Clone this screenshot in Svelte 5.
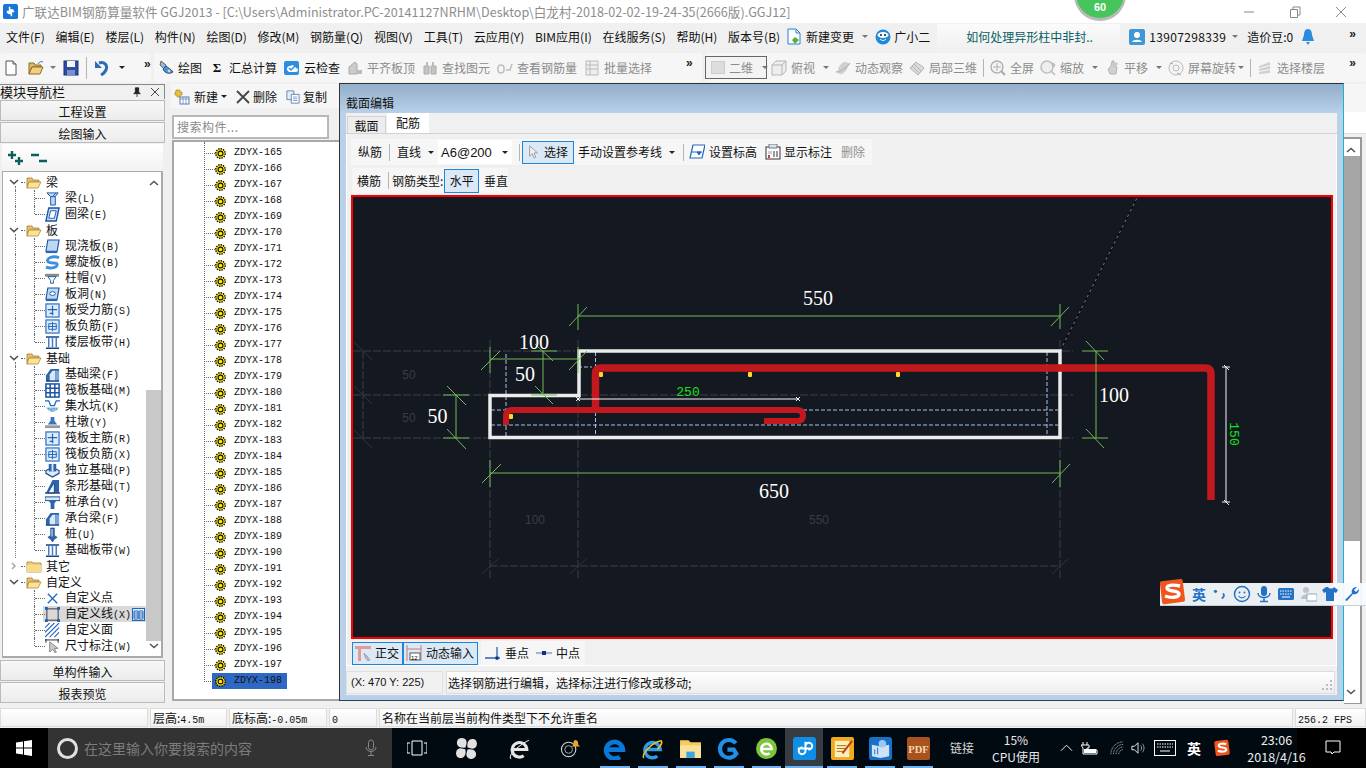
<script>
  const menu = ['文件(F)','编辑(E)','楼层(L)','构件(N)','绘图(D)','修改(M)','钢筋量(Q)','视图(V)','工具(T)','云应用(Y)','BIM应用(I)','在线服务(S)','帮助(H)','版本号(B)'];

  const tree = [
    {t:'f',k:'open',l:'梁'},
    {t:'c',k:'beam',l:'梁(L)'},
    {t:'c',k:'ring',l:'圈梁(E)',last:1},
    {t:'f',k:'open',l:'板'},
    {t:'c',k:'slab',l:'现浇板(B)'},
    {t:'c',k:'spiral',l:'螺旋板(B)'},
    {t:'c',k:'cap',l:'柱帽(V)'},
    {t:'c',k:'hole',l:'板洞(N)'},
    {t:'c',k:'cross',l:'板受力筋(S)'},
    {t:'c',k:'cross2',l:'板负筋(F)'},
    {t:'c',k:'band',l:'楼层板带(H)',last:1},
    {t:'f',k:'open',l:'基础'},
    {t:'c',k:'fbeam',l:'基础梁(F)'},
    {t:'c',k:'raft',l:'筏板基础(M)'},
    {t:'c',k:'pit',l:'集水坑(K)'},
    {t:'c',k:'pier',l:'柱墩(Y)'},
    {t:'c',k:'cross',l:'筏板主筋(R)'},
    {t:'c',k:'cross2',l:'筏板负筋(X)'},
    {t:'c',k:'found',l:'独立基础(P)'},
    {t:'c',k:'strip',l:'条形基础(T)'},
    {t:'c',k:'cap2',l:'桩承台(V)'},
    {t:'c',k:'fbeam',l:'承台梁(F)'},
    {t:'c',k:'pile',l:'桩(U)'},
    {t:'c',k:'band',l:'基础板带(W)',last:1},
    {t:'f',k:'closed',l:'其它',closed:1,endGuide:1},
    {t:'f',k:'open',l:'自定义',noGuide:1},
    {t:'c',k:'xpt',l:'自定义点',noGuide:1},
    {t:'c',k:'sq',l:'自定义线(X)',noGuide:1,sel:1},
    {t:'c',k:'hatch',l:'自定义面',noGuide:1},
    {t:'c',k:'dim',l:'尺寸标注(W)',noGuide:1,last:1},
  ];

  const comps = [];
  for (let i = 165; i <= 198; i++) comps.push(i);

  const grayA = [
    {w:'m',l:'平齐板顶'},{w:'b',l:'查找图元'},{w:'g',l:'查看钢筋量'},{w:'s',l:'批量选择'},
  ];
  const head = (l) => { const i = l.indexOf('('); return i < 0 ? l : l.slice(0, i); };
  const tail = (l) => { const i = l.indexOf('('); return i < 0 ? '' : l.slice(i); };
</script>

{#snippet ti(k)}
  <svg class="ti" viewBox="0 0 16 16">
    {#if k==='beam'}
      <path d="M2 2h12l-3 4v9H6V6z" fill="#bcd8f2" stroke="#1a55a8"/><path d="M8 6l4-4M6 6h5" stroke="#1a55a8"/>
    {:else if k==='ring'}
      <path d="M4 1h11l-3 14H1z" fill="#cfe3f6" stroke="#1a55a8" stroke-width="1.5"/><path d="M6 4h6l-2 8H4z" fill="#fff" stroke="#1a55a8"/>
    {:else if k==='slab'}
      <path d="M3 1h12l-2 12H1z" fill="#bcd8f2" stroke="#1a55a8" stroke-width="1.2"/><path d="M1 13h12v2H1z" fill="#2563b8"/>
    {:else if k==='spiral'}
      <path d="M15 3C8 0 1 4 3 7s10 0 10 3-6 5-12 3" fill="none" stroke="#3f8fdc" stroke-width="3"/>
    {:else if k==='cap'}
      <path d="M0 3h15v3H0z" fill="#8a8a8a"/><path d="M3 6h9L9 10v3H6v-3z" fill="#fff" stroke="#1a55a8"/>
    {:else if k==='hole'}
      <path d="M3 1h12l-2 12H1z" fill="#bcd8f2" stroke="#1a55a8" stroke-width="1.2"/><ellipse cx="8" cy="7" rx="3" ry="2" fill="#fff" stroke="#1a55a8"/><path d="M1 13h12v2H1z" fill="#2563b8"/>
    {:else if k==='cross'}
      <rect x="1" y="1" width="14" height="14" fill="#dcebf9" stroke="#2166bd" stroke-width="1.2"/><path d="M3 7h10M8 3v10M5 11h4" stroke="#2166bd" stroke-width="1.3"/>
    {:else if k==='cross2'}
      <rect x="1" y="1" width="14" height="14" fill="#dcebf9" stroke="#2166bd" stroke-width="1.2"/><path d="M3 8h10M8 3v10M4 5h8v6H4z" fill="none" stroke="#2166bd"/>
    {:else if k==='band'}
      <path d="M1 2h14M1 14h14" stroke="#14438a" stroke-width="1.6"/><path d="M4 3v10M8 3v10M12 3v10" stroke="#4a7ec2" stroke-width="1.6"/>
    {:else if k==='fbeam'}
      <path d="M1 15V9l5-7h9v13z" fill="#2f63ab"/><path d="M5 15V8l3-4h3v11z" fill="#d9e8f7"/><path d="M11 4h4v11h-4z" fill="#7ba6d6"/><path d="M1 15h14" stroke="#14438a" stroke-width="1.5"/>
    {:else if k==='raft'}
      <rect x="1" y="1" width="14" height="14" fill="#fff" stroke="#1a55a8" stroke-width="1.6"/><path d="M1 5.500h14M1 10.500h14M5.500 1v14M10.500 1v14" stroke="#1a55a8" stroke-width="1.6"/>
    {:else if k==='pit'}
      <path d="M0 2h4l2 5h4l2-5h4" fill="none" stroke="#2166bd" stroke-width="1.4"/><path d="M1 9c4 6 10 6 14 0z" fill="#8fc1e8"/><path d="M3 10h1M6 11h1M9 10h1M12 11h1M7 13h1" stroke="#33658f"/>
    {:else if k==='pier'}
      <path d="M6 2h4v4l3 4H3l3-4z" fill="#3a74bc"/><path d="M0 11h16v3H0z" fill="#9a9a9a"/>
    {:else if k==='found'}
      <path d="M1 8l7-3 7 3v3l-7 4-7-4z" fill="#dcebf9" stroke="#14438a" stroke-width="1.2"/><path d="M4 1h8v8H4z" fill="#2f63ab"/><path d="M7 1h2v8H7z" fill="#d9e8f7"/>
    {:else if k==='strip'}
      <path d="M1 15l3-6 4-8h7v14z" fill="#2f63ab"/><path d="M3 15l3-5 3-5h1v10z" fill="#eef5fb" stroke="#14438a"/><path d="M0 15h16" stroke="#14438a" stroke-width="1.4"/>
    {:else if k==='cap2'}
      <path d="M0 2h16v4H0z" fill="#d9e8f7" stroke="#14438a"/><path d="M4 6h8l-2 3v6H6V9z" fill="#2f63ab"/>
    {:else if k==='pile'}
      <path d="M6 1h4v8l3 2-3 2-2 3-2-3-3-2 3-2z" fill="#2f63ab" stroke="#14438a" stroke-width=".6"/><path d="M7 2h1v8H7z" fill="#fff"/>
    {:else if k==='xpt'}
      <path d="M3 3l10 10M13 3L3 13" stroke="#2166bd" stroke-width="1.4"/>
    {:else if k==='sq'}
      <rect x="2" y="2" width="12" height="12" fill="none" stroke="#333"/><g fill="#1561c0"><rect x="0" y="0" width="3" height="3"/><rect x="13" y="0" width="3" height="3"/><rect x="0" y="13" width="3" height="3"/><rect x="13" y="13" width="3" height="3"/></g>
    {:else if k==='hatch'}
      <path d="M0 5l5-5M0 10L10 0M0 15L15 0M5 15L15 5M10 15l5-5" stroke="#2166bd" stroke-width="1.2"/>
    {:else if k==='dim'}
      <path d="M0 1h15M1 0v4M14 0v4" stroke="#222"/><path d="M5 3l0 11 3-3 3 4 1-1-2-4h4z" fill="#c8c8c8" stroke="#888"/>
    {/if}
  </svg>
{/snippet}

{#snippet folder(open)}
  <svg class="fold" viewBox="0 0 16 13">
    {#if open}
      <path d="M1 2h5l1 2h6v2H3L1 12z" fill="#e8bf66" stroke="#a98134" stroke-width=".8"/><path d="M3 6h12l-3 6H1z" fill="#f9e39c" stroke="#b58a3a" stroke-width=".8"/>
    {:else}
      <path d="M1 2h5l1 1h8v9H1z" fill="#f4cf71" stroke="#a98134" stroke-width=".8"/><path d="M1 5h14v7H1z" fill="#f7dc8e"/>
    {/if}
  </svg>
{/snippet}

{#snippet tb(k)}
  <svg class="tbi" viewBox="0 0 16 16">
    {#if k==='new'}
      <path d="M3 1h7l3 3v11H3z" fill="#fff" stroke="#555"/><path d="M10 1v3h3" fill="#ddd" stroke="#555"/>
    {:else if k==='open'}
      <path d="M1 3h5l1 2h6v2H4L1 14z" fill="#dcb866" stroke="#8c6a2e"/><path d="M4 7h11l-3 7H1z" fill="#f3d07c" stroke="#8c6a2e"/><path d="M10 4c1-2 3-3 5-2" fill="none" stroke="#3a6fb8"/>
    {:else if k==='save'}
      <rect x="1" y="1" width="14" height="14" fill="#2d4ea8" stroke="#182f72"/><rect x="4" y="1" width="8" height="6" fill="#f5f5f5"/><rect x="4" y="10" width="8" height="5" fill="#7d8fc8"/>
    {:else if k==='undo'}
      <path d="M5 3c5-2 9 2 7 7-1 2-3 4-5 5" fill="none" stroke="#2b6cb8" stroke-width="3"/><path d="M1 1v7h7z" fill="#2b6cb8"/>
    {:else if k==='draw'}
      <path d="M3 1l5 4-2 4-4-4z" fill="#9ab7d9" stroke="#333" stroke-width=".7"/><path d="M5 9c2 5 7 5 10 3-2-3-5-4-7-6z" fill="#4a8fd9" stroke="#1d4f90"/><circle cx="11" cy="11" r="1.400" fill="#ffd860"/>
    {:else if k==='cloud'}
      <rect x="0" y="1" width="15" height="14" rx="2" fill="#2c8ee0"/><path d="M3 10a3 3 0 013-4 4 4 0 016 2 2 2 0 010 4H5z" fill="#fff"/><path d="M5 8l2 2 4-4" fill="none" stroke="#2c8ee0" stroke-width="1.400"/>
    {:else if k==='m'}
      <path d="M2 14V7l6-5 2 2v10z" fill="#ccc" stroke="#aaa"/><path d="M10 10h5v4h-5z" fill="#bbb"/>
    {:else if k==='b'}
      <path d="M2 6h5v8H2zM9 6h5v8H9z" fill="#c4c4c4" stroke="#aaa"/><path d="M4 2h2v4H4zM10 2h2v4h-2z" fill="#bbb"/>
    {:else if k==='g'}
      <path d="M1 8a3 3 0 016 0v2a3 3 0 01-6 0zM9 10h4l2-6" fill="none" stroke="#c0c0c0" stroke-width="1.600"/>
    {:else if k==='s'}
      <rect x="2" y="1" width="12" height="14" fill="#eee" stroke="#bbb"/><path d="M2 5h12M2 9h12M6 1v14" stroke="#bbb"/>
    {:else if k==='cube'}
      <path d="M1 5l4-4h10v10l-4 4H1z" fill="#eee" stroke="#b5b5b5"/><path d="M1 5h10v10M11 5l4-4" fill="none" stroke="#b5b5b5"/>
    {:else if k==='orbit'}
      <ellipse cx="8" cy="8" rx="4" ry="7" transform="rotate(35 8 8)" fill="#d0d0d0"/><path d="M1 12c5 0 10-4 14-9" fill="none" stroke="#bbb" stroke-width="1.400"/>
    {:else if k==='part'}
      <path d="M1 8l6-6 8 6-6 7z" fill="#ddd" stroke="#b0b0b0"/><path d="M5 4l7 7M3 6l7 7" stroke="#b0b0b0"/>
    {:else if k==='zoomf'}
      <circle cx="7" cy="7" r="6" fill="#f3f3f3" stroke="#b0b0b0" stroke-width="1.400"/><path d="M7 3v8M3 7h8" stroke="#b0b0b0"/><path d="M11 11l4 4" stroke="#aaa" stroke-width="2"/>
    {:else if k==='zoom'}
      <circle cx="7" cy="7" r="6" fill="#eee" stroke="#c0c0c0" stroke-width="1.600"/><path d="M11 11l4 4M12 3l3 2M12 6h3" stroke="#bbb" stroke-width="1.600"/>
    {:else if k==='pan'}
      <path d="M4 9l3-3 1-5 2 0v5l3 1-1 7H6z" fill="#cfcfcf" stroke="#aaa" stroke-width=".8"/><path d="M12 2v4M10 4h4" stroke="#bbb"/>
    {:else if k==='rot'}
      <circle cx="8" cy="8" r="7" fill="#f4f4f4" stroke="#bbb"/><circle cx="8" cy="8" r="3" fill="none" stroke="#bbb"/><path d="M2 3l3 1M9 13l4 2" stroke="#aaa"/>
    {:else if k==='floor'}
      <path d="M2 6l11-4v3L2 8zM2 9l11-3v3L2 11zM2 12l11-2v3L2 14z" fill="#d0d0d0"/>
    {:else if k==='cursor'}
      <path d="M3 1l0 12 3-3 2 5 2-1-2-5h4z" fill="#eee" stroke="#999"/>
    {:else if k==='lvl'}
      <path d="M4 1h12l-3 13H1z" fill="#fff" stroke="#2166bd" stroke-width="1.200"/><path d="M3 8h10M8 8l2 3 2-3z" fill="#2166bd" stroke="#2166bd"/>
    {:else if k==='mark'}
      <rect x="1" y="3" width="14" height="12" fill="#fff" stroke="#333"/><path d="M3 7h4v3H3z" fill="#bcd4ec"/><path d="M4 0h8v4H4z" fill="#d9e4f0" stroke="#777"/><rect x="3" y="11" width="2" height="3" fill="#d33"/><path d="M9 7v6M12 7v6" stroke="#333"/>
    {:else if k==='ortho'}
      <path d="M0 1h16v3H0zM3 4h3v12H3z" fill="#e29a9a"/><path d="M9 8l3 3 3 4-2 1-3-4z" fill="#bbb" stroke="#888" stroke-width=".6"/>
    {:else if k==='dyn'}
      <path d="M1 0v16M15 0v16M1 4h14" stroke="#c97878"/><rect x="4" y="8" width="10" height="7" fill="#fff" stroke="#555"/><text x="5" y="14.500" font-size="6" font-family="Liberation Sans">12</text>
    {:else if k==='perp'}
      <path d="M0 13h15M12 2v13" stroke="#2b62b8" stroke-width="1.300"/><rect x="10.500" y="11.500" width="3" height="3" fill="#102f86"/>
    {:else if k==='mid'}
      <path d="M0 8h16" stroke="#6a93cc" stroke-width="1.300"/><rect x="6" y="6" width="4" height="4" fill="#102f86"/>
    {/if}
  </svg>
{/snippet}

{#snippet caret()}<span class="caret"></span>{/snippet}

<div class="app">
  <div class="bubble"><span>60</span></div>

  <header class="title">
    <svg class="logo" viewBox="0 0 16 16"><rect width="16" height="16" rx="2" fill="#1677d9"/><path d="M5 8a2 2 0 102-2V3M11 8a2 2 0 10-2 2v3M4 8h8" fill="none" stroke="#fff" stroke-width="1.600"/></svg>
    <span class="ttext">广联达BIM钢筋算量软件 GGJ2013 - [C:\Users\Administrator.PC-20141127NRHM\Desktop\白龙村-2018-02-02-19-24-35(2666版).GGJ12]</span>
    <div class="wbtns">
      <svg viewBox="0 0 12 12"><path d="M1 6h10" stroke="#888"/></svg>
      <svg viewBox="0 0 12 12"><path d="M1.500 3.500h7v8h-7zM4 3V1h7v8H9" fill="none" stroke="#888"/></svg>
      <svg viewBox="0 0 12 12"><path d="M1 1l10 10M11 1L1 11" stroke="#888"/></svg>
    </div>
  </header>

  <nav class="menu">
    <div class="mitems">
      {#each menu as m}<span>{m}</span>{/each}
    </div>
    <div class="mx change">
      <svg viewBox="0 0 14 17" class="ci"><path d="M1 1h8l4 4v11H1z" fill="#fff" stroke="#2b7fd6"/><path d="M9 1v4h4" fill="none" stroke="#2b7fd6"/><path d="M8 9l4 3-4 4-3-4z" fill="#5ab035"/></svg>
      <span>新建变更</span>{@render caret()}
    </div>
    <div class="mx gxe">
      <svg viewBox="0 0 16 16" class="ci2"><circle cx="8" cy="8" r="7.500" fill="#1f8ad8"/><ellipse cx="8" cy="6" rx="5.500" ry="3" fill="#fff"/><circle cx="6" cy="6" r="1" fill="#123"/><circle cx="10" cy="6" r="1" fill="#123"/><path d="M5 10c2 2 4 2 6 0" stroke="#fff" fill="none"/></svg>
      <span>广小二</span>
    </div>
    <div class="ticker"><span>如何处理异形柱中非封..</span></div>
    <div class="mx user">
      <svg viewBox="0 0 16 16" class="ci2"><rect width="16" height="16" rx="2" fill="#3f97d6"/><circle cx="8" cy="6" r="3" fill="#fff"/><path d="M3 13c1-3 9-3 10 0z" fill="#fff"/></svg>
      <span class="phone">13907298339</span>{@render caret()}
      <span class="bean">造价豆:0</span>
      <svg viewBox="0 0 14 18" class="bell"><path d="M7 1c3 0 4 3 4 6l2 6H1l2-6c0-3 1-6 4-6zM5 14h4l-2 3z" fill="#2a8be0"/></svg>
    </div>
    <span class="more lastmore">»</span>
  </nav>

  <div class="tools">
    <div class="band b1">
      {@render tb('new')}{@render tb('open')}<span class="caret c1"></span>{@render tb('save')}<i class="sep"></i>{@render tb('undo')}<span class="caret c2"></span><span class="more m1">»</span>
    </div>
    <div class="band b2">
      <div class="tool dk">{@render tb('draw')}<span>绘图</span></div>
      <div class="tool dk"><b class="sigma">Σ</b><span>汇总计算</span></div>
      <div class="tool dk">{@render tb('cloud')}<span>云检查</span></div>
      {#each grayA as g}
        <div class="tool">{@render tb(g.w)}<span>{g.l}</span></div>
      {/each}
      <span class="more m2">»</span>
    </div>
    <div class="band b3">
      <div class="combo2"><i class="sq"></i><span>二维</span><span class="caret"></span></div>
      <div class="tool">{@render tb('cube')}<span>俯视</span><span class="caret"></span></div>
      <div class="tool">{@render tb('orbit')}<span>动态观察</span></div>
      <div class="tool">{@render tb('part')}<span>局部三维</span></div>
      <i class="sep"></i>
      <div class="tool">{@render tb('zoomf')}<span>全屏</span></div>
      <div class="tool">{@render tb('zoom')}<span>缩放</span><span class="caret"></span></div>
      <div class="tool">{@render tb('pan')}<span>平移</span><span class="caret"></span></div>
      <div class="tool">{@render tb('rot')}<span>屏幕旋转</span><span class="caret tight"></span></div>
      <i class="sep"></i>
      <div class="tool">{@render tb('floor')}<span>选择楼层</span></div>
      <span class="more m3">»</span>
    </div>
  </div>

  <main class="main">
    <aside class="nav">
      <div class="navhead"><span>模块导航栏</span><span class="pins">
        <svg viewBox="0 0 10 12"><path d="M3 1h4v5l2 2H1l2-2zM5 8v4" fill="#222" stroke="#222"/></svg>
        <svg viewBox="0 0 10 10"><path d="M1 1l8 8M9 1L1 9" stroke="#444"/></svg>
      </span></div>
      <div class="nbtn">工程设置</div>
      <div class="nbtn">绘图输入</div>
      <div class="treewrap">
        <div class="treetool">
          <svg viewBox="0 0 18 16"><path d="M5 1v8M1 5h8" stroke="#0b5f5c" stroke-width="2.400"/><path d="M12 7v8M8 11h8" stroke="#0b5f5c" stroke-width="2.400"/></svg>
          <svg viewBox="0 0 18 16"><path d="M1 5h8M9 11h8" stroke="#0b5f5c" stroke-width="2.400"/></svg>
        </div>
        <div class="treebox">
          <div class="rows">
            {#each tree as r}
              {#if r.t==='f'}
                <div class="row frow" class:eg={r.endGuide}>
                  <svg class="chev" viewBox="0 0 10 8">
                    {#if r.closed}<path d="M3 1l3 3-3 3" fill="none" stroke="#aaa" stroke-width="1.600"/>
                    {:else}<path d="M1 2l4 3.600L9 2" fill="none" stroke="#555" stroke-width="1.600"/>{/if}
                  </svg>
                  <i class="stub s1"></i>
                  {@render folder(!r.closed)}
                  <span class="fl">{r.l}</span>
                </div>
              {:else}
                <div class="row crow" class:sel={r.sel} class:guide={!r.noGuide} class:last={r.last}>
                  <i class="stub s2"></i>
                  {@render ti(r.k)}
                  <span class="cl2">{head(r.l)}<span class="mn12">{tail(r.l)}</span></span>
                  {#if r.sel}<svg class="mini" viewBox="0 0 13 13"><rect x=".5" y=".5" width="12" height="12" fill="#e3effa" stroke="#2166bd"/><path d="M2 3h4v8H2zM7 3h4v8H7z" fill="#fff" stroke="#2166bd"/><path d="M2 5h4M2 7h4M2 9h4M7 5h4M7 7h4M7 9h4" stroke="#2166bd"/></svg>{/if}
                </div>
              {/if}
            {/each}
          </div>
          <div class="tscroll">
            <svg class="up" viewBox="0 0 10 6"><path d="M1 5l4-3.500L9 5" fill="none" stroke="#555" stroke-width="1.600"/></svg>
            <div class="thumb"></div>
            <svg class="dn" viewBox="0 0 10 6"><path d="M1 1l4 3.500L9 1" fill="none" stroke="#555" stroke-width="1.600"/></svg>
          </div>
        </div>
      </div>
      <div class="nbtn">单构件输入</div>
      <div class="nbtn">报表预览</div>
    </aside>

    <section class="comp">
      <div class="ctool">
        <svg class="ci3" viewBox="0 0 16 16"><path d="M2 1h4v2h2v3H6v2H3V6H1V3h1z" fill="#e9c13a" stroke="#9c7f16" stroke-width=".6"/><rect x="6" y="8" width="9" height="7" fill="#fff" stroke="#5a7fb0"/><path d="M6 10h9M9 8v7M12 8v7" stroke="#5a7fb0" stroke-width=".7"/></svg>
        <span>新建</span><span class="caret dark"></span>
        <svg class="ci3 x" viewBox="0 0 14 14"><path d="M1 1l12 12M13 1L1 13" stroke="#444" stroke-width="1.800"/></svg>
        <span>删除</span>
        <svg class="ci3 x" viewBox="0 0 16 16"><path d="M1 1h8v10H1z" fill="#e4eef8" stroke="#5a7fb0"/><path d="M6 5h9v10H6z" fill="#fff" stroke="#5a7fb0"/><path d="M8 8h5M8 10h5M8 12h5" stroke="#7a9cc6"/></svg>
        <span>复制</span>
      </div>
      <div class="search">搜索构件...</div>
      <div class="clist">
        {#each comps as c}
          <div class="citem" class:csel={c===198}>
            <i class="stub s3"></i>
            <svg class="sun" viewBox="0 0 10 10"><circle cx="5" cy="5" r="4.300" fill="#ffe600" stroke="#111" stroke-width="1.400" stroke-dasharray="1.300 .9"/><circle cx="5" cy="5" r="2.200" fill="none" stroke="#111"/><circle cx="5" cy="5" r=".8" fill="#ffe600"/></svg>
            <span class="mono">ZDYX-{c}</span>
          </div>
        {/each}
      </div>
    </section>

    <div class="rightstrip">
      <div class="rtop"></div>
      <div class="rwhite"></div>
      <div class="rscroll">
        <svg class="up" viewBox="0 0 10 6"><path d="M1 5l4-3.500L9 5" fill="none" stroke="#555" stroke-width="1.600"/></svg>
        <div class="rthumb"></div>
        <svg class="dn" viewBox="0 0 10 6"><path d="M1 1l4 3.500L9 1" fill="none" stroke="#555" stroke-width="1.600"/></svg>
      </div>
    </div>

    <div class="dialog">
      <div class="dtitle">截面编辑</div>
      <div class="dpage">
        <div class="tabs"><span class="tab">截面</span><span class="tab on">配筋</span></div>
        <div class="dbody">
          <div class="bar1">
            <span class="lb">纵筋</span><i class="sep"></i>
            <span class="lb">直线</span><span class="caret dark"></span>
            <div class="combo"><span>A6@200</span><span class="caret dark"></span></div>
            <i class="sep s4"></i>
            <div class="pressed sel1">{@render tb('cursor')}<span>选择</span></div>
            <span class="lb">手动设置参考线</span><span class="caret dark"></span>
            <i class="sep s5"></i>
            <div class="lbi">{@render tb('lvl')}<span>设置标高</span></div>
            <div class="lbi mk">{@render tb('mark')}<span>显示标注</span></div>
            <span class="lb grey">删除</span>
          </div>
          <div class="bar2">
            <span class="lb">横筋</span><i class="sep"></i>
            <span class="lb t">钢筋类型:</span>
            <div class="pressed h">水平</div>
            <span class="lb">垂直</span>
          </div>
          <div class="canvas">
            <svg viewBox="353 197 978 440">
              <g class="da">
                <path d="M353 351H575M353 395H490M353 438H490"/>
                <path d="M580 395H1073M1062 351H1073M1062 438H1073"/>
                <path d="M363 351V438"/>
                <path d="M490 340V580M578 340V580M1060 340V580"/>
                <path d="M490 566H1060"/>
              </g>
              <g class="dal">
                <path d="M354 342L372 360M354 386L372 404M354 430L372 448"/>
                <path d="M482 574L499 558M570 574L587 558M1052 574L1069 558"/>
              </g>
              <path d="M1060 351L1137 198" class="diag"/>
              <path d="M1060 351L1137 198" class="diag2"/>

              <g class="bl">
                <path d="M491 410H1058M491 425H1058"/>
                <path d="M506 354V437M595.500 352V437M1047 352V437"/>
                <path d="M578 367H592"/>
              </g>

              <path d="M579 351H1060V437.500H490V395.500H579Z" class="outline"/>

              <path d="M595.500 410V374Q595.500 368 601 368H1205Q1211 368 1211 374V500" class="r8"/>
              <path d="M506 425V416Q506 410 512 410H797Q803 410 803 415.500Q803 421 797 421H764" class="r6"/>

              <g fill="#ffd921">
                <rect x="509" y="414" width="4" height="5" rx="1"/><rect x="599" y="372" width="4" height="5" rx="1"/>
                <rect x="748" y="372" width="4" height="5" rx="1"/><rect x="896" y="372" width="4" height="5" rx="1"/>
              </g>

              <g class="gr">
                <path d="M578 316H1060M578 304V330M1060 304V329M569 326L587 307M1051 326L1069 307"/>
                <path d="M490 359H578M490 347V373M578 347V373M481 370L500 351M569 370L587 351"/>
                <path d="M543 351V395M531 351H557M531 395H557M535 344L553 361M535 386L553 404"/>
                <path d="M456 395V438M443 395H469M443 438H469M447 386L466 405M447 429L466 449"/>
                <path d="M490 473H1060M490 460V487M1060 460V487M482 483L501 464M1052 483L1070 464"/>
                <path d="M1096 351V438M1082 351H1108M1082 438H1108M1086 341L1104 360M1086 429L1104 448"/>
              </g>

              <g class="wl">
                <path d="M578 399H798M576 397L580 401M576 401L580 397M796 401L800 397M796 397L800 401"/>
                <path d="M1226 367V502M1222 367H1230M1222 502H1230M1224 365L1229 370M1224 500L1229 505"/>
              </g>

              <g class="cadt">
                <text x="818" y="304.500">550</text>
                <text x="534" y="349">100</text>
                <text x="525" y="380.500">50</text>
                <text x="437.500" y="423">50</text>
                <text x="774" y="498">650</text>
                <text x="1114" y="402">100</text>
              </g>
              <g class="cadg">
                <text x="409" y="379">50</text>
                <text x="409" y="422">50</text>
                <text x="535" y="524">100</text>
                <text x="819" y="524">550</text>
              </g>
              <text x="688" y="395.500" class="gt">250</text>
              <text x="0" y="0" class="gt" transform="translate(1230 434) rotate(90)">150</text>
            </svg>
          </div>
          <div class="bar3">
            <div class="pressed o1">{@render tb('ortho')}<span>正交</span></div>
            <div class="pressed o2">{@render tb('dyn')}<span>动态输入</span></div>
            <div class="snap">
              <div class="lbi">{@render tb('perp')}<span>垂点</span></div>
              <div class="lbi">{@render tb('mid')}<span>中点</span></div>
            </div>
          </div>
        </div>
        <div class="dstatus">
          <span class="xy">(X: 470 Y: 225)</span>
          <span class="msg">选择钢筋进行编辑，选择标注进行修改或移动;<svg class="grip" viewBox="0 0 12 12"><g fill="#bbb"><rect x="9" y="0" width="2" height="2"/><rect x="5" y="4" width="2" height="2"/><rect x="9" y="4" width="2" height="2"/><rect x="1" y="8" width="2" height="2"/><rect x="5" y="8" width="2" height="2"/><rect x="9" y="8" width="2" height="2"/></g></svg></span>
        </div>
      </div>
    </div>

    <div class="sogou">
      <svg class="slogo" viewBox="0 0 26 26"><rect x="1" y="1" width="23" height="23" rx="2" transform="rotate(-7 13 13)" fill="#f1551e"/><path d="M20 7c-4-1-13-2-13 2s12 2 12 6-9 4-14 2" fill="none" stroke="#fff" stroke-width="3.400"/></svg>
      <b class="seng">英</b>
      <svg viewBox="0 0 20 16" class="sg"><circle cx="5" cy="5" r="1.800" fill="#2372c6"/><path d="M13 8c2 0 2 3-1 5" fill="none" stroke="#2372c6" stroke-width="2"/></svg>
      <svg viewBox="0 0 18 18" class="sg"><circle cx="9" cy="9" r="7.500" fill="none" stroke="#2372c6" stroke-width="1.500"/><circle cx="6.500" cy="7.500" r="1" fill="#2372c6"/><circle cx="11.500" cy="7.500" r="1" fill="#2372c6"/><path d="M5.500 11c2 2.500 5 2.500 7 0" fill="none" stroke="#2372c6" stroke-width="1.200"/></svg>
      <svg viewBox="0 0 18 18" class="sg"><rect x="6" y="1" width="6" height="10" rx="3" fill="#2372c6"/><path d="M3 8c0 6 12 6 12 0M9 13v3M5 16.500h8" fill="none" stroke="#2372c6" stroke-width="1.500"/></svg>
      <svg viewBox="0 0 18 18" class="sg"><rect x="1" y="3" width="16" height="12" rx="1.500" fill="#2372c6"/><path d="M3 6h12M3 9h12" stroke="#fff" stroke-dasharray="1.500 1"/><path d="M5 12h8" stroke="#fff"/></svg>
      <svg viewBox="0 0 18 18" class="sg"><circle cx="7" cy="5" r="3" fill="#b6c4d4"/><path d="M2 14c0-6 10-6 10 0z" fill="#b6c4d4"/><rect x="8" y="9" width="10" height="7" fill="#fff" stroke="#9aa9ba"/></svg>
      <svg viewBox="0 0 18 18" class="sg"><path d="M5 2L1 5l2 3 2-1v9h8V7l2 1 2-3-4-3c-1 2-5 2-6 0z" fill="#2372c6"/></svg>
      <svg viewBox="0 0 18 18" class="sg"><path d="M2 15l7-7a4.500 4.500 0 015-6l-3 3 2 2 3-3a4.500 4.500 0 01-6 5l-6 7z" fill="#2372c6"/></svg>
    </div>
  </main>

  <footer class="status">
    <div class="st a"></div>
    <div class="st b">层高:<span class="mn">4.5m</span></div>
    <div class="st c">底标高:<span class="mn">-0.05m</span></div>
    <div class="st d"><span class="mn">0</span></div>
    <div class="st e">名称在当前层当前构件类型下不允许重名</div>
    <div class="st f"><span class="mn">256.2 FPS</span></div>
  </footer>

  <div class="taskbar">
    <div class="start"><svg viewBox="0 0 16 16"><path d="M0 2.500l7-1v6H0zM8 1.300L16 0v7.500H8zM0 8.500h7v6l-7-1zM8 8.500h8V16l-8-1.200z" fill="#fff"/></svg></div>
    <div class="tsearch">
      <i class="cortana"></i>
      <span>在这里输入你要搜索的内容</span>
      <svg viewBox="0 0 12 18"><rect x="3.500" y="1" width="5" height="10" rx="2.500" fill="none" stroke="#888"/><path d="M1 8c0 6 10 6 10 0M6 13v3M3 16.500h6" fill="none" stroke="#888"/></svg>
    </div>
    <div class="apps">
      <div class="app-i"><svg viewBox="0 0 20 20" class="tv"><path d="M5 3h10v14H5zM3 5H0v10h3M17 5h3v10h-3" fill="none" stroke="#fff"/></svg></div>
      <div class="app-i"><svg viewBox="0 0 22 22"><g fill="#e2e2e2"><path d="M10 10C4 11 1 8 2 4s8-4 9 0c.5 2-.5 4-1 6z"/><path d="M12 10C11 4 14 1 18 2s4 8 0 9c-2 .5-4-.5-6-1z"/><path d="M12 12c6-1 9 2 8 6s-8 4-9 0c-.5-2 .5-4 1-6z"/><path d="M10 12c1 6-2 9-6 8s-4-8 0-9c2-.5 4 .5 6 1z"/></g></svg></div>
      <div class="app-i"><svg viewBox="0 0 22 22"><path d="M5 12h13a7 7 0 10-3 6" fill="none" stroke="#e6e6e6" stroke-width="3"/><path d="M3 21c-4-3 6-12 17-18" fill="none" stroke="#e6e6e6"/></svg></div>
      <div class="app-i"><svg viewBox="0 0 24 22"><circle cx="9" cy="12" r="7.500" fill="none" stroke="#ccc" stroke-width="1.200"/><circle cx="9" cy="12" r="4" fill="none" stroke="#aaa"/><path d="M16 2c3 0 3 3 3 5l2 2H12l2-2c0-2 0-5 2-5z" fill="#e8a823"/></svg></div>
      <div class="app-i run"><svg viewBox="0 0 22 22"><path d="M5 12h14a8 8 0 10-3 7" fill="none" stroke="#0a78d7" stroke-width="4.500"/></svg></div>
      <div class="app-i run"><svg viewBox="0 0 24 24"><path d="M6 13h14a8 8 0 10-3 7" fill="none" stroke="#2f9be8" stroke-width="3.600"/><path d="M3 22c-3-4 8-16 18-18 2 2-2 7-4 9" fill="none" stroke="#f2c024" stroke-width="1.600"/></svg></div>
      <div class="app-i run"><svg viewBox="0 0 22 22"><path d="M1 3h8l2 2h10v15H1z" fill="#f5cd5d"/><path d="M1 8h20v12H1z" fill="#fbe29a"/><path d="M7 20v-6h8v6" fill="#3ba5e0"/></svg></div>
      <div class="app-i run"><svg viewBox="0 0 22 22"><path d="M18 6a8.500 8.500 0 10.500 10l-2.500-4H10" fill="none" stroke="#1f8fe8" stroke-width="4"/></svg></div>
      <div class="app-i run"><svg viewBox="0 0 22 22"><circle cx="11" cy="11" r="10" fill="#7cc63a"/><path d="M6 11.500h10a5 5 0 10-2 4" fill="none" stroke="#fff" stroke-width="2.400"/></svg></div>
      <div class="app-i run act"><svg viewBox="0 0 24 24"><rect width="24" height="24" rx="3" fill="#0f8ee8"/><path d="M10 11a3.500 3.500 0 103 3.500V5M16 13a3.500 3.500 0 10-3-3.500M5 12h14" fill="none" stroke="#fff" stroke-width="2"/></svg></div>
      <div class="app-i run"><svg viewBox="0 0 24 24"><rect width="24" height="24" rx="2" fill="#f1a91e"/><rect x="4" y="4" width="15" height="17" fill="#fbeebd"/><path d="M6 9h10M6 12h10M6 15h7" stroke="#b06f10"/><path d="M12 17L22 4" stroke="#c43a1a" stroke-width="2"/></svg></div>
      <div class="app-i run"><svg viewBox="0 0 24 24"><rect width="24" height="24" rx="3" fill="#1a6fc8"/><path d="M3 8l9 2 9-2v12l-9 2-9-2z" fill="#cfe3f6"/><circle cx="14" cy="7" r="4" fill="#9cc8ef"/><path d="M6 13v5M9 11v7" stroke="#1a6fc8"/></svg></div>
      <div class="app-i run"><svg viewBox="0 0 24 24"><rect width="24" height="24" rx="2" fill="#a8521e"/><text x="12" y="17" text-anchor="middle" font-size="11" font-family="Liberation Serif" font-weight="700" fill="#f5d7b2">PDF</text></svg></div>
    </div>
    <div class="tray">
      <span class="lnk">链接</span>
      <div class="cpu"><span>15%</span><span>CPU使用</span></div>
      <svg viewBox="0 0 14 10" class="tr"><path d="M1 8l6-6 6 6" fill="none" stroke="#fff"/></svg>
      <svg viewBox="0 0 18 14" class="tr"><path d="M2 1v3M6 1v3" stroke="#fff"/><path d="M0 4h8v3H6v2h10v4H2V7z" fill="none" stroke="#fff"/><rect x="3" y="8" width="12" height="4" fill="#fff"/></svg>
      <svg viewBox="0 0 16 16" class="tr"><path d="M1 15a14 14 0 0114-14M4 15a11 11 0 0111-11M7 15a8 8 0 018-8M10 15a5 5 0 015-5" fill="none" stroke="#ccc" stroke-dasharray="1.200 .8"/></svg>
      <svg viewBox="0 0 16 16" class="tr"><path d="M1 6h3l4-4v12l-4-4H1z" fill="none" stroke="#fff"/><path d="M11 5c1.500 2 1.500 4 0 6M13 3c2.500 3 2.500 7 0 10" fill="none" stroke="#aaa"/></svg>
      <svg viewBox="0 0 22 16" class="tr"><rect x=".5" y=".5" width="21" height="15" fill="none" stroke="#fff"/><path d="M3 4h16M3 7h16" stroke="#fff" stroke-dasharray="1.500 1"/><path d="M6 11h10" stroke="#fff"/></svg>
      <b class="eng">英</b>
      <svg viewBox="0 0 18 18" class="tr"><rect x="1" y="1" width="15" height="16" rx="2" transform="rotate(-7 8 9)" fill="#f1551e"/><path d="M13 5c-3-1-8-1-8 1.500s8 1.500 8 4-5 3-9 1.500" fill="none" stroke="#fff" stroke-width="2.200"/></svg>
      <div class="clock"><span>23:06</span><span>2018/4/16</span></div>
      <svg viewBox="0 0 16 16" class="tr"><path d="M1 1h14v11H9l-2 2-1-2H1z" fill="none" stroke="#fff"/></svg>
    </div>
  </div>
</div>

<style>
  :global(body) { margin: 0; background: #f0f0f0; }
  .app { width: 1366px; height: 768px; position: relative; overflow: hidden; display: flex; flex-direction: column; font: 12px/16px "Noto Sans CJK SC", "Liberation Sans", sans-serif; color: #111; background: #f0f0f0; }
  svg { display: block; flex: none; }
  i { font-style: normal; display: block; flex: none; }

  .bubble { position: absolute; left: 1076px; top: -30px; width: 48px; height: 48px; border-radius: 50%; background: #46c55c; box-shadow: 0 1px 0 2px #b9b9b9; z-index: 5; color: #fff; font: 700 11px "Liberation Sans", sans-serif; text-align: center; }
  .bubble span { position: absolute; left: 0; right: 0; top: 31px; }

  .title { height: 23px; background: #fff; display: flex; align-items: center; flex: none; padding-left: 3px; }
  .logo { width: 15px; height: 15px; }
  .ttext { margin-left: 4px; color: #8d8d8d; font-size: 12.600px; white-space: nowrap; }
  .wbtns { margin-left: auto; display: flex; gap: 34px; padding-right: 19px; }
  .wbtns svg { width: 12px; height: 12px; }

  .menu { height: 27px; flex: none; display: flex; align-items: center; background: #f0f0f0; padding-left: 6px; position: relative; }
  .mitems { display: flex; gap: 10.750px; }
  .mx { display: flex; align-items: center; }
  .change { margin-left: 7px; gap: 5px; }
  .change .caret { margin-left: 3px; }
  .ci { width: 14px; height: 17px; }
  .ci2 { width: 16px; height: 16px; }
  .gxe { margin-left: 7px; gap: 3px; }
  .ticker { margin-left: 7px; width: 183px; height: 26px; background: linear-gradient(#fbfbfb,#f0f0f0); display: flex; align-items: center; padding-left: 29px; box-sizing: border-box; color: #055d63; white-space: nowrap; }
  .user { margin-left: 9px; }
  .phone { margin-left: 4px; letter-spacing: .35px; }
  .user .caret { margin-left: 6px; }
  .bean { margin-left: 9px; }
  .bell { width: 14px; height: 18px; margin-left: 8px; }
  .more { font: 700 12px/12px "Liberation Sans", sans-serif; color: #222; }
  .lastmore { position: absolute; right: 10px; top: 5px; }

  .caret { display: inline-block; flex: none; width: 0; height: 0; border: 3px solid transparent; border-top: 3.500px solid #777; border-bottom: 0; }
  .caret.dark { border-top-color: #222; }

  .tools { height: 29px; margin-top: 3px; flex: none; display: flex; gap: 3px; position: relative; }
  .band { background: #f6f6f6; display: flex; align-items: center; border-radius: 2px; }
  .tbi { width: 16px; height: 16px; }
  .b1 { width: 151px; padding-left: 3px; box-sizing: border-box; }
  .b1 > svg:nth-child(2) { margin-left: 9px; }
  .c1 { margin-left: 6px; }
  .b1 > svg:nth-child(4) { margin-left: 7px; }
  .b1 .sep { margin: 0 7px; height: 22px; }
  .c2 { margin-left: 9px; border-top-color: #222; }
  .m1 { margin-left: 19px; margin-top: -8px; }
  .b2 { width: 548px; padding-left: 4px; box-sizing: border-box; gap: 7px; color: #8c8c8c; position: relative; }
  .m2 { position: absolute; left: 532px; top: 4px; }
  .tool { display: flex; align-items: center; gap: 4px; white-space: nowrap; }
  .dk { color: #111; }
  .sigma { width: 16px; text-align: center; font: 700 13px "Liberation Serif", serif; }
  .b3 { flex: 1; gap: 6px; color: #8c8c8c; position: relative; }
  .combo2 { width: 62px; height: 23px; border: 1px solid #666; box-sizing: border-box; display: flex; align-items: center; padding-left: 5px; gap: 4px; background: #f3f3f3; white-space: nowrap; margin-right: -2px; }
  .combo2 .sq { width: 14px; height: 13px; background: #ddd; border: 1px solid #ccc; box-sizing: border-box; }
  .combo2 .caret { margin-left: 5px; }
  .tool .caret { margin-left: 4px; }
  .tool .caret.tight { margin-left: -2px; }
  .m3 { position: absolute; right: 10px; top: 4px; }
  .sep { width: 1px; height: 18px; background: #b4b4b4; }

  .main { flex: 1; position: relative; display: flex; min-height: 0; padding-top: 2px; box-sizing: border-box; align-items: flex-start; }

  .nav { width: 165px; flex: none; display: flex; flex-direction: column; }
  .navhead { height: 14px; display: flex; align-items: center; justify-content: space-between; border: 1px solid #888; border-width: 1px 1px 0 0; padding-right: 4px; font-size: 13px; line-height: 12px; }
  .pins { display: flex; gap: 8px; align-items: center; }
  .pins svg { width: 10px; height: 10px; }
  .nbtn { height: 21px; margin-top: 1px; border: 1px solid #bbb; background: linear-gradient(#f7f7f7, #ececec); text-align: center; line-height: 21px; font-size: 12px; box-sizing: border-box; }
  .treewrap { height: 514px; margin: 1px 0; display: flex; flex-direction: column; padding: 0 2px; box-sizing: border-box; }
  .treetool { height: 27px; display: flex; align-items: center; padding-left: 5px; gap: 5px; background: linear-gradient(#fff, #f2f2f2); flex: none; }
  .treetool svg { width: 18px; height: 16px; }
  .treebox { flex: 1; display: flex; background: #fff; border: 1px solid #999; border-width: 1px 2px 2px 1px; border-color: #aaa; min-height: 0; }
  .rows { flex: 1; padding-top: 2px; min-width: 0; }
  .row { height: 16px; display: flex; align-items: center; position: relative; white-space: nowrap; }
  .frow { padding-left: 6px; }
  .chev { width: 10px; height: 8px; }
  .stub { height: 0; width: 9px; border-top: 1px dotted #666; }
  .s1 { width: 4px; margin-left: 2px; }
  .fold { width: 16px; height: 13px; margin-left: 1px; }
  .fl { margin-left: 4px; }
  .crow { padding-left: 32px; }
  .crow::before { content: ""; position: absolute; left: 31px; top: 0; bottom: 0; border-left: 1px dotted #666; }
  .crow.last::before { bottom: 8px; }
  .crow.guide::after, .frow::after { content: ""; position: absolute; left: 12px; top: 0; bottom: 0; border-left: 1px dotted #777; }
  .frow::after { top: 12px; }
  .frow.eg::after { bottom: 8px; }
  .frow:nth-last-child(5)::after { display: none; }
  .s2 { width: 10px; }
  .ti { width: 15px; height: 15px; }
  .cl2 { margin-left: 5px; }
  .mn12 { font: 10px/16px "Liberation Mono", monospace; }
  .crow.sel { background: linear-gradient(#d9d9d9,#d9d9d9) no-repeat 40px 0 / 103px 16px; }
  .mini { position: absolute; left: 129px; top: 2px; width: 13px; height: 13px; }
  .tscroll { width: 15px; flex: none; position: relative; background: #fff; }
  .tscroll .up { position: absolute; left: 3px; top: 8px; width: 10px; height: 6px; }
  .tscroll .dn { position: absolute; left: 3px; bottom: 7px; width: 10px; height: 6px; }
  .thumb { position: absolute; left: 0; right: 0; top: 218px; height: 251px; background: #c8c8c8; }

  .comp { width: 169px; margin-left: 6px; flex: none; display: flex; flex-direction: column; }
  .ctool { height: 24px; display: flex; align-items: center; padding-left: 3px; background: #f6f6f6; gap: 3px; padding-top: 1px; box-sizing: border-box; }
  .ctool > span:first-of-type { margin-left: 1px; }
  .ci3 { width: 16px; height: 16px; }
  .ctool .x { margin-left: 6px; width: 14px; height: 14px; }
  .search { height: 24px; width: 157px; margin: 7px 0 1px 1px; border: 2px solid #b8b8b8; box-sizing: border-box; background: #fff; color: #8a8a8a; padding-left: 3px; line-height: 19px; font-size: 12px; letter-spacing: .5px; }
  .clist { height: 561px; margin-left: 1px; background: #fff; border: 2px solid #a8a8a8; border-right: 0; box-sizing: border-box; padding-top: 3px; position: relative; }
  .citem { height: 16px; display: flex; align-items: center; padding-left: 30px; position: relative; }
  .clist::before { content: ""; position: absolute; left: 30px; top: 0; height: 538px; border-left: 1px dotted #666; }
  .s3 { width: 11px; }
  .sun { width: 11px; height: 11px; }
  .mono { font: 10px/16px "Liberation Mono", monospace; margin-left: 8px; width: 48px; }
  .csel { background: linear-gradient(#2f68c4,#2f68c4) no-repeat 38px 0 / 75px 16px; }

  .rightstrip { margin-left: auto; width: 22px; flex: none; height: 620px; position: relative; display: flex; flex-direction: column; }
  .rtop { height: 28px; flex: none; background: #f6f6f6; }
  .rwhite { height: 21px; flex: none; background: #fff; border-bottom: 1px solid #ddd; }
  .rscroll { margin-top: 3px; width: 16px; height: 568px; border: 1px solid #999; border-left-width: 0; border-right-width: 2px; border-top-width: 2px; background: #fff; position: relative; }
  .rscroll .up { position: absolute; left: 2px; top: 8px; width: 10px; height: 6px; }
  .rscroll .dn { position: absolute; left: 2px; bottom: 8px; width: 10px; height: 6px; }
  .rthumb { position: absolute; left: 0; right: 0; top: 17px; height: 385px; background: #a6a6a6; }

  .dialog { position: absolute; left: 339px; top: 1px; width: 1005px; height: 618px; box-sizing: border-box; border: 1px solid #333; border-right-color: #12b7c9; border-bottom-color: #24424f; background: linear-gradient(#93aecb 0, #bad1e9 30px, #b9d0e8 100%); display: flex; flex-direction: column; padding: 0 6px 5px 6px; z-index: 2; }
  .dtitle { height: 29px; flex: none; line-height: 38px; font-size: 12px; }
  .dpage { flex: 1; display: flex; flex-direction: column; min-height: 0; background: #f0f0f0; }
  .tabs { height: 20px; flex: none; display: flex; align-items: flex-end; gap: 1px; background: #f0f0f0; padding-left: 1px; border-bottom: 1px solid #d2d2d2; box-sizing: content-box; }
  .tab { width: 39px; height: 17px; text-align: center; line-height: 17px; background: #ededed; border: 1px solid #d2d2d2; border-bottom: 0; box-sizing: border-box; }
  .tab.on { width: 42px; height: 20px; background: #fff; line-height: 20px; border: 0; }
  .dbody { height: 532px; flex: none; background: #f0f0f0; border: 1px solid #fff; border-top: 0; box-sizing: border-box; padding: 5px 0 0 4px; display: flex; flex-direction: column; }
  .bar1 { width: 521px; height: 26px; background: #f6f6f6; display: flex; align-items: center; padding-left: 7px; box-sizing: border-box; flex: none; }
  .bar2 { width: 156px; height: 25px; margin: 3px 0 2px 1px; background: #f6f6f6; display: flex; align-items: center; padding-left: 5px; box-sizing: border-box; flex: none; }
  .lb { white-space: nowrap; }
  .grey { color: #909090; }
  .bar1 .sep, .bar2 .sep { margin: 0 7px; height: 17px; }
  .bar2 .sep { margin: 0 3px 0 7px; }
  .bar1 > .caret { margin-left: 7px; }
  .combo { width: 74px; height: 24px; margin-left: 4px; display: flex; align-items: center; background: #fff; padding-left: 3px; box-sizing: border-box; font: 13px "Liberation Sans", sans-serif; }
  .combo .caret { margin-left: auto; margin-right: 4px; }
  .bar1 .s4 { margin: 0 2px 0 7px; }
  .bar1 .s5 { margin: 0 5px 0 8px; }
  .pressed { border: 1px solid #1d84d8; background: #dbe9f6; box-sizing: border-box; display: flex; align-items: center; white-space: nowrap; }
  .sel1 { width: 52px; height: 23px; padding-left: 4px; gap: 3px; margin-right: 4px; }
  .sel1 .tbi { width: 14px; height: 16px; }
  .lbi { display: flex; align-items: center; gap: 4px; margin-right: 8px; white-space: nowrap; }
  .lbi.mk { gap: 3px; margin-right: 9px; }
  .h { width: 35px; height: 24px; justify-content: center; margin-right: 5px; }
  .t { margin-right: 1px; }
  .canvas { margin: 0 0 2px 0; width: 982px; height: 444px; flex: none; box-sizing: border-box; border: 2px solid #f60000; background: #141820; }
  .canvas svg { width: 978px; height: 440px; }
  .da path, .da { fill: none; stroke: #3b4049; stroke-width: 1; stroke-dasharray: 8 2; }
  .dal { fill: none; stroke: #2f343c; stroke-width: 1; }
  .diag { fill: none; stroke: #6e7278; stroke-dasharray: 3 3; }
  .diag2 { fill: none; stroke: #000; stroke-dasharray: 3 3; stroke-dashoffset: 3; }
  .bl { fill: none; stroke: #a4c3e6; stroke-dasharray: 4 2; }
  .outline { fill: none; stroke: #ececec; stroke-width: 3.500; }
  .r8 { fill: none; stroke: #c4181f; stroke-width: 7.500; }
  .r6 { fill: none; stroke: #c4181f; stroke-width: 6; }
  .gr, .gr path { fill: none; stroke: #6fb956; stroke-width: 1; }
  .wl { fill: none; stroke: #f4f4f4; stroke-width: 1; }
  .cadt text { fill: #fff; font: 20px "Liberation Serif", serif; text-anchor: middle; }
  .cadg text { fill: #383d46; font: 12px "Liberation Sans", sans-serif; text-anchor: middle; }
  .gt { fill: #18e018; font: 13px "Liberation Mono", monospace; text-anchor: middle; }

  .bar3 { height: 24px; display: flex; align-items: center; flex: none; padding-left: 1px; }
  .o1 { width: 51px; height: 23px; padding-left: 2px; gap: 4px; }
  .o2 { width: 75px; height: 23px; padding-left: 2px; gap: 4px; }
  .snap { margin-left: 3px; width: 104px; height: 24px; background: #f6f6f6; display: flex; align-items: center; padding-left: 4px; box-sizing: border-box; }
  .snap .lbi { margin-right: 7px; }

  .dstatus { height: 23px; margin-top: 5px; display: flex; gap: 3px; flex: none; }
  .xy { width: 97px; background: #f1f1f1; border: 1px solid #e0e0e0; box-sizing: border-box; font: 11px/21px "Liberation Sans", sans-serif; padding-left: 4px; white-space: nowrap; }
  .msg { flex: 1; margin-right: 2px; background: linear-gradient(#fff,#eee); border: 1px solid #dcdcdc; box-sizing: border-box; line-height: 21px; padding-left: 1px; position: relative; }
  .grip { position: absolute; right: 1px; bottom: 1px; width: 12px; height: 12px; }

  .sogou { position: absolute; left: 1160px; top: 501px; width: 206px; height: 23px; background: rgba(248,251,254,.95); border-bottom: 1px solid #c4cfdc; display: flex; align-items: center; z-index: 4; padding-left: 32px; box-sizing: border-box; gap: 4px; }
  .slogo { position: absolute; left: 0; top: -4px; width: 26px; height: 26px; }
  .seng { color: #2372c6; font-size: 14px; margin-right: 1px; }
  .sg { width: 18px; height: 18px; }

  .status { height: 20px; flex: none; display: flex; gap: 2px; padding-bottom: 1px; box-sizing: border-box; }
  .st { background: linear-gradient(#fff,#f1f1f1); border: 1px solid #dcdcdc; box-sizing: border-box; padding-left: 2px; line-height: 17px; white-space: nowrap; overflow: hidden; }
  .mn { font: 10px/17px "Liberation Mono", monospace; }
  .a { width: 148px; } .b { width: 77px; } .c { width: 98px; } .d { width: 48px; } .e { flex: 1; } .f { width: 71px; }

  .taskbar { height: 40px; flex: none; background: linear-gradient(90deg, #020a11 1297px, #000 1297px); display: flex; align-items: center; color: #e8e8e8; position: relative; }
  .start { width: 48px; height: 40px; background: #000; display: flex; align-items: center; justify-content: center; }
  .start svg { width: 16px; height: 16px; }
  .tsearch { width: 344px; height: 40px; background: #333; display: flex; align-items: center; position: relative; color: #7c7c7c; padding-left: 9px; box-sizing: border-box; }
  .cortana { width: 15px; height: 15px; border: 3px solid #e0e0e0; border-radius: 50%; }
  .tsearch span { margin-left: 6px; font-size: 14px; white-space: nowrap; }
  .tsearch svg { position: absolute; right: 15px; top: 11px; width: 12px; height: 18px; }
  .apps { display: flex; align-items: center; padding-left: 1px; height: 40px; }
  .app-i { width: 37.900px; height: 40px; display: flex; align-items: center; justify-content: center; position: relative; flex: none; }
  .app-i svg { width: 23px; height: 23px; }
  .app-i .tv { width: 20px; height: 20px; }
  .apps .app-i:nth-child(1) { width: 47px; }
  .apps .app-i:nth-child(2) { width: 52px; }
  .apps .app-i:nth-child(3) { width: 54px; }
  .apps .app-i:nth-child(4) { width: 50px; }
  .run::after { content: ""; position: absolute; left: 4px; right: 4px; bottom: 0; height: 2px; background: #6db3f2; }
  .act { background: #363c42; }
  .act::after { left: 0; right: 0; }
  .tray { display: flex; align-items: center; height: 40px; position: relative; flex: 1; min-width: 0; }
  .lnk { position: absolute; left: 13px; top: 12px; color: #d8d8d8; white-space: nowrap; }
  .cpu { position: absolute; left: 55px; top: 3px; display: flex; flex-direction: column; align-items: center; color: #e8e8e8; line-height: 17px; white-space: nowrap; }
  .tr { position: absolute; width: 16px; height: 14px; top: 13px; }
  .tray svg:nth-of-type(1) { left: 123px; width: 13px; height: 10px; top: 15px; }
  .tray svg:nth-of-type(2) { left: 144px; width: 18px; }
  .tray svg:nth-of-type(3) { left: 172px; }
  .tray svg:nth-of-type(4) { left: 193px; }
  .tray svg:nth-of-type(5) { left: 217px; width: 22px; height: 16px; top: 12px; }
  .eng { position: absolute; left: 250px; top: 12px; font-size: 14px; color: #fff; }
  .tray svg:nth-of-type(6) { left: 277px; width: 17px; height: 18px; top: 11px; }
  .clock { position: absolute; left: 302px; top: 3px; width: 75px; display: flex; flex-direction: column; align-items: center; line-height: 17px; color: #eee; font-size: 12.500px; white-space: nowrap; }
  .tray svg:nth-of-type(7) { left: 388px; width: 16px; height: 16px; top: 12px; }
</style>
